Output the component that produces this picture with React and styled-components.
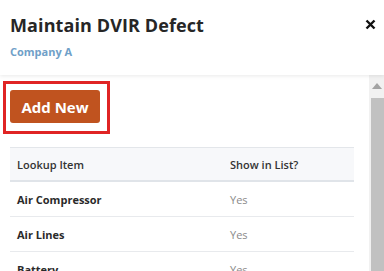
import React from "react";
import styled, { createGlobalStyle } from "styled-components";

const GlobalStyle = createGlobalStyle`
  html, body {
    margin: 0;
    padding: 0;
    background: #fff;
    font-family: "Open Sans", "Liberation Sans", sans-serif;
  }
`;

const Root = styled.div`
  width: 384px;
  height: 271px;
  overflow: hidden;
  display: flex;
  flex-direction: column;
  background: #fff;
`;

const Header = styled.div`
  position: relative;
  z-index: 1;
  height: 75px;
  box-sizing: border-box;
  padding: 13px 8px 0 10px;
  display: flex;
  justify-content: space-between;
  align-items: flex-start;
  background: #fff;
  box-shadow: 0 1px 4px rgba(0, 0, 0, 0.09);
`;

const TitleBlock = styled.div`
  display: flex;
  flex-direction: column;
`;

const Title = styled.h1`
  margin: 0;
  font-size: 18px;
  line-height: 24px;
  font-weight: 700;
  letter-spacing: 0.1px;
  color: #262626;
`;

const Company = styled.div`
  margin-top: 7px;
  font-size: 11px;
  font-weight: 700;
  color: #6fa0c8;
`;

const Close = styled.button`
  border: none;
  background: none;
  padding: 0;
  margin-top: 5px;
  width: 12px;
  height: 12px;
  display: flex;
  align-items: center;
  justify-content: center;
`;

const Body = styled.div`
  flex: 1;
  display: flex;
  min-height: 0;
`;

const Content = styled.div`
  flex: 1;
  padding: 6px 15px 0 3px;
  overflow: hidden;
`;

const Highlight = styled.div`
  display: inline-block;
  border: 3px solid #e02424;
  padding: 6px 7px 8px 4px;
`;

const Button = styled.button`
  width: 90px;
  height: 33px;
  border: none;
  border-radius: 3px;
  background: #c0531f;
  color: #fff;
  font-family: inherit;
  font-size: 15px;
  font-weight: 700;
  display: block;
`;

const Table = styled.table`
  margin: 13px 0 0 7px;
  width: 344px;
  border-collapse: collapse;
  font-size: 11px;
`;

const HeadCell = styled.th`
  height: 32px;
  padding: 0 7px;
  text-align: left;
  font-weight: 600;
  color: #333;
  background: #f7f8fa;
  border-top: 1px solid #e3e6ea;
  border-bottom: 2px solid #e0e4e9;
  width: ${(p) => p.w || "auto"};
`;

const Cell = styled.td`
  height: 34px;
  padding: 0 7px;
  border-bottom: 1px solid #e8eaed;
  font-weight: ${(p) => (p.muted ? 400 : 700)};
  color: ${(p) => (p.muted ? "#8a8a8a" : "#2a2a2a")};
`;

const Scrollbar = styled.div`
  width: 15px;
  background: #f1f1f1;
  display: flex;
  flex-direction: column;
  align-items: flex-end;
`;

const Arrow = styled.div`
  align-self: center;
  margin-top: 8px;
  width: 0;
  height: 0;
  border-left: 5px solid transparent;
  border-right: 5px solid transparent;
  border-bottom: 6px solid #a3a3a3;
`;

const Thumb = styled.div`
  margin-top: 9px;
  width: 13px;
  flex: 1;
  background: #c1c1c1;
`;

const rows = ["Air Compressor", "Air Lines", "Battery"];

export default function App() {
  return (
    <Root>
      <GlobalStyle />
      <Header>
        <TitleBlock>
          <Title>Maintain DVIR Defect</Title>
          <Company>Company A</Company>
        </TitleBlock>
        <Close aria-label="close">
          <svg width="11" height="11" viewBox="0 0 11 11">
            <path d="M1.5 1.5 L9.5 9.5 M9.5 1.5 L1.5 9.5" stroke="#111" strokeWidth="2.4" />
          </svg>
        </Close>
      </Header>
      <Body>
        <Content>
          <Highlight>
            <Button>Add New</Button>
          </Highlight>
          <Table>
            <thead>
              <tr>
                <HeadCell w="199px">Lookup Item</HeadCell>
                <HeadCell>Show in List?</HeadCell>
              </tr>
            </thead>
            <tbody>
              {rows.map((r) => (
                <tr key={r}>
                  <Cell>{r}</Cell>
                  <Cell muted>Yes</Cell>
                </tr>
              ))}
            </tbody>
          </Table>
        </Content>
        <Scrollbar>
          <Arrow />
          <Thumb />
        </Scrollbar>
      </Body>
    </Root>
  );
}
